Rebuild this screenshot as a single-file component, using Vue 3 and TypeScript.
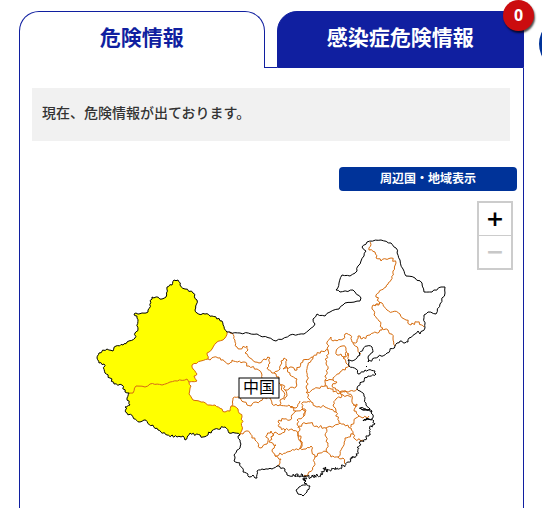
<script setup lang="ts">
import { ref } from 'vue'

type Point = [number, number]

const tab = ref<'danger' | 'infection'>('danger')

// Borders are stored as coarse vertices: "x,y x,y ...".
const parse = (s: string): Point[] =>
  s.trim().split(/\s+/).map((p) => p.split(',').map(Number) as Point)

const noise = (x: number, y: number): number => {
  const n = Math.sin(x * 12.9898 + y * 78.233) * 43758.5453
  return (n - Math.floor(n)) * 2 - 1
}

// Adds small irregular steps between vertices so that borders look surveyed.
const roughen = (pts: Point[], amp: number, step: number): Point[] => {
  const out: Point[] = [pts[0]]
  for (let i = 1; i < pts.length; i++) {
    const [x0, y0] = pts[i - 1]
    const [x1, y1] = pts[i]
    const len = Math.hypot(x1 - x0, y1 - y0) || 1
    const n = Math.max(1, Math.round(len / step))
    for (let k = 1; k < n; k++) {
      const x = x0 + ((x1 - x0) * k) / n
      const y = y0 + ((y1 - y0) * k) / n
      const d = noise(x, y) * amp
      out.push([x - ((y1 - y0) / len) * d, y + ((x1 - x0) / len) * d])
    }
    out.push([x1, y1])
  }
  return out
}

const toPath = (pts: Point[]): string =>
  'M' + pts.map(([x, y]) => `${x.toFixed(1)} ${y.toFixed(1)}`).join('L')

const xinjiangOuter = roughen(parse(`
  227,332 222,321 212,316 205,314 197,313 195,310 197,300 193,293 185,289 180,285 178,280 174,280
  172,285 167,287 166,297 162,299 152,297 148,312 146,313 134,314 137,318 138,329 135,333 135,338
  127,342 123,345 116,346 113,351 107,349 99,353 97,358 99,363 104,364 105,373 110,378 114,384
  122,385 125,392 129,393`), 1.1, 2)

const tibetOuter = roughen(parse(`
  129,393 127,398 130,405 125,407 127,413 140,422 144,420 158,430 167,435 177,437 183,436 185,440
  190,433 203,437 215,429 225,427 229,433 235,433 240,435`), 1.2, 1.8)

const xinjiangEast = roughen(parse(`
  227,332 225,338 216,343 212,349 207,353 208,359 192,365 193,369 197,374 194,376 197,381 189,382`), 0.9, 2.4)

const xinjiangTibet = roughen(parse(`
  189,382 187,379 170,382 162,385 150,384 145,387 136,386 133,393 129,393`), 0.8, 2.6)

const tibetEast = roughen(parse(`
  189,382 191,386 189,394 193,400 199,401 210,405 215,405 225,412 230,411 231,406 234,406 238,409
  242,417 242,430 240,435`), 1, 2.2)

const xinjiang = toPath([...xinjiangEast, ...xinjiangTibet, ...[...xinjiangOuter].reverse()])
const tibet = toPath([...tibetEast, ...[...tibetOuter].reverse(), ...[...xinjiangTibet].reverse()])

const south = roughen(parse(`
  240,435 238,436 240,440 240,448 234,455 234,461 240,463 243,472 248,474 249,477 253,475 255,478
  257,478 257,471 262,469 272,469 277,466 285,469 287,475 293,476`), 1.1, 2)

const southCoast = roughen(parse(`
  293,476 297,474 299,477 303,475 305,481 307,476 311,477 316,475 322,475 325,467 326,471 333,469
  342,467 348,462 353,458 358,452 359,446 362,441 366,437 370,432 369,428 373,425 374,421`), 2, 0.9)

const eastCoast = roughen(parse(`
  374,421 369,419 363,421 367,418 372,419 372,411 366,409 360,408 367,410 370,409 366,405 364,396
  360,391 357,389 362,382 368,376 376,374 375,371 365,370 358,374 356,369 349,366 348,360 352,361
  358,356 363,349 367,346 372,347 373,352 368,358 368,362 378,357 387,353 395,346 400,341 405,343
  408,342 409,338`), 1.2, 1.8)

const northEast = roughen(parse(`
  409,338 415,334 418,331 420,334 425,328 424,315 428,312 436,314 440,304 445,293 445,287 441,287
  432,292 424,292 422,283 415,278 406,276 403,269 400,260 396,248 391,243 381,240 367,242 362,247
  366,251 364,256 358,266 357,271 350,276 342,275 339,283 336,290 340,292 353,290 361,298 360,301
  345,303 339,309 330,312 325,316 317,314 313,319 315,324 309,330 304,334 290,335 276,341 257,334
  240,333 227,332`), 0.9, 2.8)

const hainan = toPath(roughen(parse('299,487 305,485 310,486 307,492 303,496 298,494 296,490 299,487'), 0.8, 1.8))

const outerBorders = [xinjiangOuter, tibetOuter, south, southCoast, eastCoast, northEast].map(toPath)

const provinceLines = [
  // Gansu and Qinghai
  '208,359 218,358 229,364 232,360 243,362 249,366 257,369 262,375 262,378',
  // Gansu and Inner Mongolia
  '229,332 232,333 235,342 237,347 240,349 247,346 248,350 245,353 250,358 255,362 259,363 264,359 270,358 270,363 267,368 274,373 280,369 281,361 284,358 287,360 286,365 283,369 290,367 297,370 303,360 313,357 321,351 328,350',
  // Ningxia
  '286,366 290,375 297,379 296,387 289,389 285,390 283,385 279,383 279,377 274,373',
  '285,390 287,396 284,400',
  // Qinghai and Sichuan
  '232,406 233,398 238,397 244,402 251,406 256,402 260,401 263,398 270,398 272,404 280,405 280,400 284,398 283,391 280,385',
  // Sichuan, Chongqing
  '280,405 289,405 296,411 290,420 284,419 278,422 279,427 285,430 281,434 275,432 273,436 271,431 267,435 267,444 260,448 255,440 250,433 246,431 243,434 240,433',
  '296,411 302,409 305,413 304,416 297,420 300,429 298,434 292,429 285,430',
  '290,407 296,408 300,401',
  // Guizhou
  '273,436 269,442 276,445 272,451 275,456 287,452 300,448 301,442 298,434',
  // Guangxi
  '275,456 281,459 280,463 277,466',
  '300,448 306,449 311,446 312,452 315,457 314,466 308,474 304,477',
  // Hunan
  '298,428 302,424 310,423 317,426 326,428 325,435 328,443 327,452 320,453 315,457',
  '298,434 301,438 301,448',
  // Guangdong and Jiangxi
  '327,452 331,457 338,457 343,458 345,464',
  // Jiangxi and Fujian
  '338,457 342,448 345,438 353,434 351,428 340,423 334,426 326,428',
  '353,434 355,439 363,440',
  // Zhejiang and Anhui
  '351,427 356,418 359,416 363,418 369,416',
  // Hubei
  '310,402 303,402 302,407 305,409 304,416',
  '306,392 309,399 311,402 315,406 325,407 336,412 339,423',
  // Anhui and Henan
  '336,412 333,405 336,399 342,396 340,392 346,391 352,396 353,404 356,406 354,411 359,416',
  '353,405 357,404 355,407',
  // Shaanxi
  '313,357 308,365 307,376 307,392 318,388 325,386 325,380 328,369 326,363 328,350',
  // Shanxi, Hebei and Inner Mongolia
  '328,350 327,342 331,337 333,341 343,339 345,334 350,335 352,342 357,342 358,336 362,339 370,335 382,330',
  '353,343 358,349 361,354',
  // Beijing and Tianjin
  '336,352 342,346 346,348 348,354 344,357 341,354 337,355 336,352',
  '346,352 343,358 346,363 349,366',
  '348,353 349,360',
  // Shandong
  '349,366 340,372 333,380 325,380',
  '333,380 337,382 332,386 336,390 344,392 350,391 357,389',
  '325,386 331,389 338,394 343,395 351,397',
  // Inner Mongolia and the north-east
  '370,242 369,250 375,252 376,258 381,261 391,258 396,263 393,271 391,280 386,287 376,295 380,303 372,307 374,315 379,321 382,330',
  // Heilongjiang and Jilin
  '375,305 382,303 387,310 400,314 406,320 411,325 417,322 424,327',
  // Jilin and Liaoning
  '382,328 388,330 393,338 395,346',
].map((s) => toPath(roughen(parse(s), 1.4, 1.9)))

const inlandLines = [xinjiangEast, xinjiangTibet, tibetEast].map(toPath).concat(provinceLines)
</script>

<template>
  <main class="page">
    <div class="tabs" role="tablist">
      <button class="tab" :class="{ active: tab === 'danger' }" role="tab" :aria-selected="tab === 'danger'" @click="tab = 'danger'">危険情報</button>
      <span class="joint"></span>
      <button class="tab" :class="{ active: tab === 'infection' }" role="tab" :aria-selected="tab === 'infection'" @click="tab = 'infection'">感染症危険情報<span class="badge">0</span></button>
      <a class="float-link" href="#"></a>
    </div>
    <section class="panel">
      <p class="message">現在、危険情報が出ております。</p>
      <button class="nearby">周辺国・地域表示</button>
      <div class="map">
        <svg class="drawing" viewBox="20 191 503 317">
          <path class="alert" :d="xinjiang" />
          <path class="alert" :d="tibet" />
          <path v-for="(d, i) in inlandLines" :key="'i' + i" class="inland" :d="d" />
          <path v-for="(d, i) in outerBorders" :key="'o' + i" class="outer" :d="d" />
          <path class="outer" :d="hainan" />
          <path class="outer" d="M303 479L306 481L304 483L307 484M379 360h1M366 367l1-1M359 408l5 2 4 0 4 2M364 420l5-1" />
          <rect class="label-box" x="239" y="378" width="40" height="20" />
          <text class="label" x="259" y="393">中国</text>
        </svg>
        <div class="zoom">
          <button class="zoom-button">+</button>
          <button class="zoom-button" disabled>−</button>
        </div>
      </div>
    </section>
  </main>
</template>

<style>
body {
  margin: 0;
  background: #fff;
  overflow: hidden;
}
</style>

<style scoped>
.page {
  box-sizing: border-box;
  min-height: 100vh;
  padding: 11px 18px 0 19px;
  display: flex;
  flex-direction: column;
  overflow: hidden;
  color: #333;
  font-family: "Noto Sans", "Noto Sans CJK JP", sans-serif;
}
button {
  margin: 0;
  padding: 0;
  font-family: inherit;
  cursor: pointer;
}
.tabs {
  position: relative;
  display: grid;
  grid-template-columns: 1fr 12px calc(50% - 5px);
  height: 57px;
}
.tab {
  position: relative;
  padding-bottom: 5px;
  border: 1px solid #101fa0;
  border-radius: 20px 20px 0 0;
  background: #101fa0;
  color: #fff;
  font-size: 21px;
  font-weight: 700;
  line-height: 30px;
}
.tab.active {
  padding-bottom: 6px;
  border-bottom: 0;
  background: #fff;
  color: #101fa0;
}
.joint {
  border-bottom: 1px solid #101fa0;
}
.badge {
  position: absolute;
  top: -12px;
  right: -11px;
  width: 31px;
  height: 31px;
  border-radius: 50%;
  background: #cb0c0f;
  box-shadow: 1px 2px 2px rgba(0, 0, 0, 0.7);
  color: #fff;
  font-family: "Open Sans", sans-serif;
  font-size: 16px;
  line-height: 30px;
  text-align: center;
}
.float-link {
  position: absolute;
  top: 6px;
  right: -69px;
  width: 54px;
  height: 54px;
  border-radius: 50%;
  background: #039;
}
.panel {
  flex: 1;
  display: flex;
  flex-direction: column;
  border: solid #101fa0;
  border-width: 0 1px;
}
.message {
  margin: 20px 13px 26px 12px;
  padding: 13px 10px 16px;
  background: #f1f1f1;
  font-size: 14px;
  font-weight: 500;
  line-height: 24px;
}
.nearby {
  align-self: flex-end;
  width: 178px;
  height: 24px;
  margin-right: 6px;
  border: 0;
  border-radius: 4px;
  background: #039;
  color: #fff;
  font-size: 12px;
  font-weight: 700;
  line-height: 24px;
}
.map {
  position: relative;
}
.drawing {
  display: block;
  width: 100%;
}
.alert {
  fill: #ff0;
}
.inland,
.outer {
  fill: none;
  stroke-width: 1;
  stroke-linejoin: round;
}
.inland {
  stroke: #d66b0c;
}
.outer {
  stroke: #000;
}
.label-box {
  fill: #fff;
  stroke: #000;
  stroke-width: 1;
}
.label {
  fill: #000;
  font-size: 16px;
  text-anchor: middle;
}
.zoom {
  position: absolute;
  top: 10px;
  right: 10px;
  display: flex;
  flex-direction: column;
  border: 2px solid #ccc;
}
.zoom-button {
  box-sizing: content-box;
  width: 32px;
  height: 32px;
  border: 0;
  background: #fff;
  color: #000;
  font-family: "DejaVu Sans", sans-serif;
  font-size: 22px;
  font-weight: 700;
  line-height: 32px;
}
.zoom-button:first-child {
  border-bottom: 1px solid #ccc;
}
.zoom-button:disabled {
  color: #c8c8c8;
}
</style>
